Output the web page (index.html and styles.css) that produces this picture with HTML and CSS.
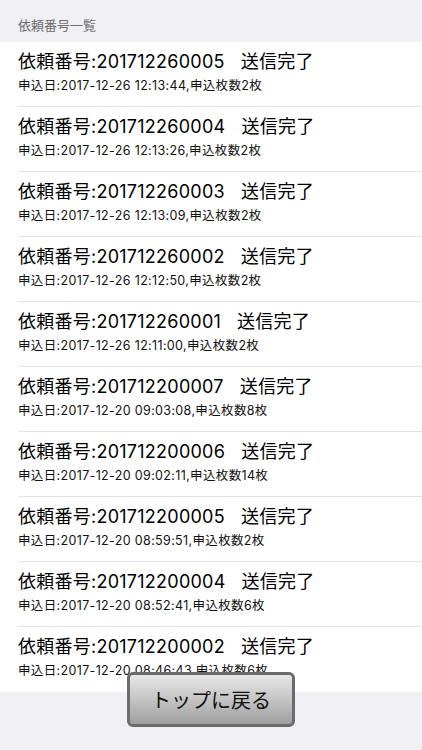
FILE: index.html
```html
<!DOCTYPE html>
<html lang="ja">

<head>
    <meta charset="UTF-8">
    <meta name="viewport" content="width=device-width, initial-scale=1.0">
    <title>依頼番号一覧</title>

    <link rel="stylesheet" href="styles.css">
</head>

<body>
    <div id="main">
        <div class="section-header">依頼番号一覧</div>
        <ul class="list">
            <li class="row">
                <div class="title">依頼番号:201712260005<span class="status">送信完了</span></div>
                <div class="sub">申込日:2017-12-26 12:13:44,申込枚数2枚</div>
            </li>
            <li class="row">
                <div class="title">依頼番号:201712260004<span class="status">送信完了</span></div>
                <div class="sub">申込日:2017-12-26 12:13:26,申込枚数2枚</div>
            </li>
            <li class="row">
                <div class="title">依頼番号:201712260003<span class="status">送信完了</span></div>
                <div class="sub">申込日:2017-12-26 12:13:09,申込枚数2枚</div>
            </li>
            <li class="row">
                <div class="title">依頼番号:201712260002<span class="status">送信完了</span></div>
                <div class="sub">申込日:2017-12-26 12:12:50,申込枚数2枚</div>
            </li>
            <li class="row">
                <div class="title">依頼番号:201712260001<span class="status">送信完了</span></div>
                <div class="sub">申込日:2017-12-26 12:11:00,申込枚数2枚</div>
            </li>
            <li class="row">
                <div class="title">依頼番号:201712200007<span class="status">送信完了</span></div>
                <div class="sub">申込日:2017-12-20 09:03:08,申込枚数8枚</div>
            </li>
            <li class="row">
                <div class="title">依頼番号:201712200006<span class="status">送信完了</span></div>
                <div class="sub">申込日:2017-12-20 09:02:11,申込枚数14枚</div>
            </li>
            <li class="row">
                <div class="title">依頼番号:201712200005<span class="status">送信完了</span></div>
                <div class="sub">申込日:2017-12-20 08:59:51,申込枚数2枚</div>
            </li>
            <li class="row">
                <div class="title">依頼番号:201712200004<span class="status">送信完了</span></div>
                <div class="sub">申込日:2017-12-20 08:52:41,申込枚数6枚</div>
            </li>
            <li class="row last">
                <div class="title">依頼番号:201712200002<span class="status">送信完了</span></div>
                <div class="sub">申込日:2017-12-20 08:46:43,申込枚数6枚</div>
            </li>
        </ul>

        <button class="back-btn" type="button">トップに戻る</button>
    </div>
</body>

</html>
```

FILE: styles.css
```css
body {
    margin: 0;
    background-color: #efeff4;
    font-family: Inter, "Noto Sans CJK JP", sans-serif;
    color: #000;
}

#main {
    position: relative;
    width: 422px;
    height: 750px;
    overflow: hidden;
}

.section-header {
    height: 42px;
    box-sizing: border-box;
    padding: 15px 0 0 18px;
    font-size: 13px;
    line-height: 20px;
    color: #6d6d72;
}

.list {
    list-style: none;
    margin: 0;
    padding: 0 0 0 18px;
    background-color: #fff;
}

.row {
    height: 65px;
    box-sizing: border-box;
    padding-top: 7px;
    border-bottom: 1px solid #e3e3e6;
}

.row.last {
    border-bottom: none;
}

.title {
    font-size: 18px;
    line-height: 26px;
    letter-spacing: 0.25px;
    white-space: nowrap;
}

.status {
    margin-left: 16px;
}

.sub {
    font-size: 12.5px;
    line-height: 22px;
    letter-spacing: 0.35px;
    white-space: nowrap;
    color: #111;
}

.back-btn {
    position: absolute;
    left: 127px;
    bottom: 23px;
    width: 168px;
    height: 55px;
    border: 3px solid #6b6b6b;
    border-radius: 6px;
    background: linear-gradient(180deg, #e6e6e6 0%, #c4c4c4 50%, #9e9e9e 100%);
    font-family: "Noto Sans CJK JP", sans-serif;
    font-size: 20px;
    color: #111;
    padding: 0;
}
```
